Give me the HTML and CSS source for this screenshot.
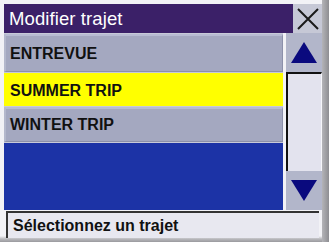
FILE: index.html
```html
<!DOCTYPE html>
<html>
<head>
<meta charset="utf-8">
<link rel="stylesheet" href="styles.css">
</head>
<body>
<div class="screen">
  <div class="frame">
    <div class="titlebar">
      <div class="title">Modifier trajet</div>
      <div class="close">
        <svg width="22" height="22" viewBox="0 0 22 22"><path d="M1 1 L21 21 M21 1 L1 21" stroke="#1a1a1a" stroke-width="2" fill="none"/></svg>
      </div>
    </div>
    <div class="main">
      <div class="list">
        <div class="row">ENTREVUE</div>
        <div class="row selected">SUMMER TRIP</div>
        <div class="row">WINTER TRIP</div>
        <div class="empty"></div>
      </div>
      <div class="scroll">
        <div class="sbtn">
          <svg width="26" height="21" viewBox="0 0 26 21"><polygon points="13,0 26,21 0,21" fill="#0a0a7e"/></svg>
        </div>
        <div class="track"></div>
        <div class="sbtn">
          <svg width="26" height="21" viewBox="0 0 26 21"><polygon points="0,0 26,0 13,21" fill="#0a0a7e"/></svg>
        </div>
      </div>
    </div>
    <div class="status">Sélectionnez un trajet</div>
  </div>
  <div class="shadow-r"></div>
</div>
</body>
</html>
```

FILE: styles.css
```css
html, body {
  margin: 0;
  padding: 0;
}
body {
  width: 329px;
  height: 242px;
  overflow: hidden;
  background: #f2f2f6;
  font-family: "Liberation Sans", Arial, sans-serif;
}
.screen {
  display: flex;
  height: 242px;
  background: linear-gradient(to bottom, #f2f2f6 0, #f2f2f6 236px, #b8b8bc 239px, #9a9a9e 242px);
}
.frame {
  width: 318px;
  padding: 4px 0 0 4px;
  display: flex;
  flex-direction: column;
}
.shadow-r {
  flex: 1;
  background: linear-gradient(to right, #b4b4b8, #8e8e92);
}
.titlebar {
  display: flex;
  height: 29px;
}
.title {
  flex: 1;
  background: #3b2068;
  color: #ffffff;
  font-size: 18.5px;
  line-height: 29px;
  padding-left: 5px;
  letter-spacing: 0.1px;
}
.close {
  width: 29px;
  background: #c6c8d6;
  display: flex;
  align-items: center;
  justify-content: center;
}
.main {
  display: flex;
  height: 177px;
  gap: 3px;
}
.list {
  flex: 1;
  display: flex;
  flex-direction: column;
  background: #c8cad8;
}
.row {
  height: 35px;
  box-sizing: border-box;
  background: #a4a8c0;
  border-top: 2px solid #b8bcd2;
  border-left: 2px solid #b4b8cc;
  border-bottom: 1px solid #8c90aa;
  border-right: 1px solid #8c90aa;
  margin-top: 1px;
  font-weight: bold;
  font-size: 16px;
  line-height: 32px;
  padding-left: 4px;
  color: #111;
}
.row:first-child {
  height: 38px;
  line-height: 35px;
}
.row.selected {
  background: #ffff00;
  border-color: #ffff00;
  height: 33px;
  line-height: 31px;
}
.empty {
  flex: 1;
  background: #1c33a6;
  margin-top: 1px;
}
.scroll {
  width: 36px;
  display: flex;
  flex-direction: column;
}
.sbtn {
  height: 39px;
  background: #b2b6ca;
  display: flex;
  align-items: center;
  justify-content: center;
}
.track {
  flex: 1;
  background: #e3e3ee;
  border-top: 2px solid #111;
  border-left: 2px solid #111;
  border-right: 1px solid #f6f6fa;
}
.status {
  margin-top: 1px;
  margin-left: 2px;
  width: 313px;
  height: 27px;
  box-sizing: border-box;
  background: #e8e8f0;
  border-top: 2px solid #333;
  border-left: 2px solid #333;
  font-weight: bold;
  font-size: 16px;
  line-height: 25px;
  padding-left: 5px;
  color: #111;
}
```
